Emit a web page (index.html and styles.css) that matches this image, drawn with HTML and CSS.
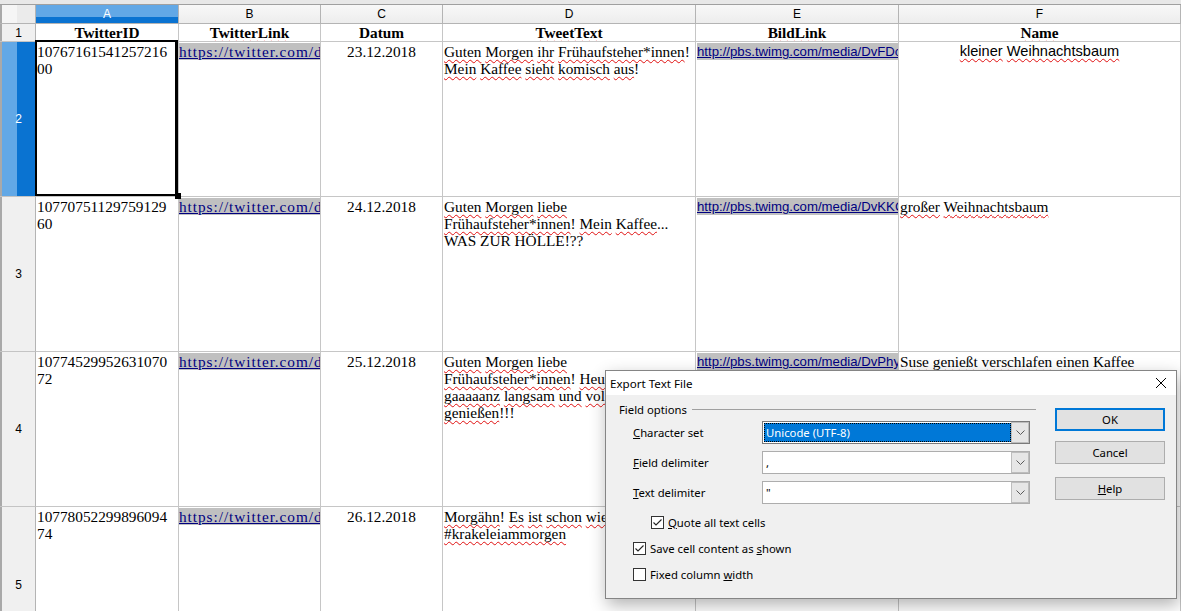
FILE: index.html
```html
<!DOCTYPE html>
<html lang="de">
<head>
<meta charset="utf-8">
<title>Export Text File</title>
<link rel="stylesheet" href="styles.css">
</head>
<body>
<div class="topstrip"></div>
<div class="sheet">
  <div class="corner"></div>
  <div class="ch on">A</div>
  <div class="ch">B</div>
  <div class="ch">C</div>
  <div class="ch">D</div>
  <div class="ch">E</div>
  <div class="ch">F</div>

  <div class="rh">1</div>
  <div class="c hd"><span class="sp">TwitterID</span></div>
  <div class="c hd"><span class="sp">TwitterLink</span></div>
  <div class="c hd">Datum</div>
  <div class="c hd"><span class="sp">TweetText</span></div>
  <div class="c hd"><span class="sp">BildLink</span></div>
  <div class="c hd"><span class="sp">Name</span></div>

  <div class="rh on">2</div>
  <div class="c sel">10767161541257216<br>00</div>
  <div class="c tw"><span class="lnk">https://twitter.com/d</span></div>
  <div class="c ctr">23.12.2018</div>
  <div class="c"><span class="sp">Guten</span> <span class="sp">Morgen</span> <span class="sp">ihr</span> <span class="sp">Frühaufsteher*innen</span>!<br><span class="sp">Mein</span> <span class="sp">Kaffee</span> <span class="sp">sieht</span> <span class="sp">komisch</span> <span class="sp">aus</span>!</div>
  <div class="c sans"><span class="lnk">http://pbs.twimg.com/media/DvFDc</span></div>
  <div class="c sansb ctr"><span class="sp">kleiner</span> <span class="sp">Weihnachtsbaum</span></div>

  <div class="rh">3</div>
  <div class="c">10770751129759129<br>60</div>
  <div class="c tw"><span class="lnk">https://twitter.com/d</span></div>
  <div class="c ctr">24.12.2018</div>
  <div class="c"><span class="sp">Guten</span> <span class="sp">Morgen</span> <span class="sp">liebe</span><br><span class="sp">Frühaufsteher*innen</span>! <span class="sp">Mein</span> <span class="sp">Kaffee</span>...<br>WAS ZUR HÖLLE!??</div>
  <div class="c sans"><span class="lnk">http://pbs.twimg.com/media/DvKKC</span></div>
  <div class="c"><span class="sp">großer</span> <span class="sp">Weihnachtsbaum</span></div>

  <div class="rh">4</div>
  <div class="c">10774529952631070<br>72</div>
  <div class="c tw"><span class="lnk">https://twitter.com/d</span></div>
  <div class="c ctr">25.12.2018</div>
  <div class="c"><span class="sp">Guten</span> <span class="sp">Morgen</span> <span class="sp">liebe</span><br><span class="sp">Frühaufsteher*innen</span>! <span class="sp">Heute</span><br><span class="sp">gaaaaanz</span> <span class="sp">langsam</span> <span class="sp">und</span> <span class="sp">voller</span><br><span class="sp">genießen</span>!!!</div>
  <div class="c sans"><span class="lnk">http://pbs.twimg.com/media/DvPhy</span></div>
  <div class="c"><span class="sp">Suse</span> <span class="sp">genießt</span> <span class="sp">verschlafen</span> <span class="sp">einen</span> <span class="sp">Kaffee</span></div>

  <div class="rh">5</div>
  <div class="c">10778052299896094<br>74</div>
  <div class="c tw"><span class="lnk">https://twitter.com/d</span></div>
  <div class="c ctr">26.12.2018</div>
  <div class="c"><span class="sp">Morgähn</span>! <span class="sp">Es</span> <span class="sp">ist</span> <span class="sp">schon</span> <span class="sp">wieder</span><br><span class="sp">#krakeleiammorgen</span></div>
  <div class="c"></div>
  <div class="c"></div>
</div>

<div class="dialog">
  <div class="titlebar">
    <span class="title">Export Text File</span>
    <svg class="close" width="10" height="10" viewBox="0 0 10 10"><path d="M0 0L10 10M10 0L0 10" stroke="#000" stroke-width="1" fill="none"/></svg>
  </div>
  <div class="dbody">
    <div class="left">
      <div class="fhead"><span>Field options</span><div class="rule"></div></div>
      <div class="fields">
        <div class="lbl"><span><u>C</u>haracter set</span></div>
        <div class="combo focus"><div class="val selv">Unicode (UTF-8)</div><div class="ddb"><svg width="9" height="5" viewBox="0 0 9 5"><path d="M0.5 0.5L4.5 4.5L8.5 0.5" stroke="#5a5a5a" fill="none"/></svg></div></div>
        <div class="lbl"><span><u>F</u>ield delimiter</span></div>
        <div class="combo"><div class="val">,</div><div class="ddb"><svg width="9" height="5" viewBox="0 0 9 5"><path d="M0.5 0.5L4.5 4.5L8.5 0.5" stroke="#5a5a5a" fill="none"/></svg></div></div>
        <div class="lbl"><span><u>T</u>ext delimiter</span></div>
        <div class="combo"><div class="val">"</div><div class="ddb"><svg width="9" height="5" viewBox="0 0 9 5"><path d="M0.5 0.5L4.5 4.5L8.5 0.5" stroke="#5a5a5a" fill="none"/></svg></div></div>
      </div>
      <div class="checks">
        <div class="chk ind"><span class="box"><svg width="11" height="11" viewBox="0 0 11 11"><path d="M1.5 5.5L4 8L9.5 2.5" stroke="#222" stroke-width="1.1" fill="none"/></svg></span><span><u>Q</u>uote all text cells</span></div>
        <div class="chk"><span class="box"><svg width="11" height="11" viewBox="0 0 11 11"><path d="M1.5 5.5L4 8L9.5 2.5" stroke="#222" stroke-width="1.1" fill="none"/></svg></span><span>Save cell content as <u>s</u>hown</span></div>
        <div class="chk"><span class="box"></span><span>Fixed column <u>w</u>idth</span></div>
      </div>
    </div>
    <div class="btns">
      <div class="pb def">OK</div>
      <div class="pb cancel">Cancel</div>
      <div class="pb help"><span><u>H</u>elp</span></div>
    </div>
  </div>
</div>
</body>
</html>
```

FILE: styles.css
```css
* { box-sizing: border-box; }
html, body { margin: 0; padding: 0; }
body {
  width: 1181px;
  height: 611px;
  overflow: hidden;
  background: #fff;
  font-family: "Liberation Serif", serif;
  position: relative;
  color: #000;
}
.topstrip {
  height: 5px;
  background: #e8e8e8;
  border-bottom: 1px solid #a0a0a0;
}
.sheet {
  display: grid;
  grid-template-columns: 36px 143px 142px 122px 253px 203px 282px;
  grid-template-rows: 19px 18px 155px 155px 155px 104px;
}
.sheet > :nth-last-child(-n+7) { border-bottom: 0; }
.corner {
  background: linear-gradient(to right, #f5f5f5 0 17px, #ebebeb 17px);
  border-right: 1px solid #b4b4b4;
  border-bottom: 1px solid #b4b4b4;
  box-shadow: inset 2px 0 #a9a9a9;
}
.ch {
  background: linear-gradient(#f8f8f8, #ededed);
  border-right: 1px solid #b4b4b4;
  border-bottom: 1px solid #b4b4b4;
  font: 12px "Liberation Sans", sans-serif;
  line-height: 18px;
  text-align: center;
}
.ch.on {
  background: linear-gradient(#62a8e6 0 12px, #0a73d1 12px);
  color: #fff;
}
.rh {
  background: #f0f0f0;
  border-right: 1px solid #b4b4b4;
  border-bottom: 1px solid #c4c4c4;
  box-shadow: inset 2px 0 #a9a9a9;
  font: 12px "Liberation Sans", sans-serif;
  display: flex;
  align-items: center;
  justify-content: center;
  padding-left: 2px;
}
.rh:nth-last-child(7) { padding-top: 51px; }
.rh.on {
  background: linear-gradient(to right, #62a8e6 0 17px, #0a73d1 17px);
  color: #fff;
}
.c {
  border-right: 1px solid #c6c6c6;
  border-bottom: 1px solid #c6c6c6;
  padding: 1px 1px 0 1px;
  font-size: 15.3px;
  line-height: 17px;
  white-space: nowrap;
  overflow: hidden;
}
.c.hd {
  font-weight: bold;
  text-align: center;
  padding-top: 0;
}
.c.ctr { text-align: center; }
.c.tw { padding-left: 0; padding-right: 0; }
.c.tw .lnk { letter-spacing: 0.95px; }
.c.sans {
  font-family: "Liberation Sans", sans-serif;
  font-size: 13.2px;
  padding-right: 0;
}
.c.sansb {
  font-family: "Liberation Sans", sans-serif;
  font-size: 14.6px;
}
.c.sel {
  position: relative;
  overflow: visible;
  z-index: 2;
}
.c.sel::after {
  content: "";
  position: absolute;
  left: -1px;
  top: -2px;
  right: 0;
  bottom: 0;
  border: 2px solid #000;
  border-right-width: 3px;
}
.c.sel::before {
  content: "";
  position: absolute;
  right: -3px;
  bottom: -3px;
  width: 6px;
  height: 6px;
  background: #000;
  z-index: 3;
}
.sp {
  text-decoration: underline wavy #e01010;
  text-decoration-thickness: 1px;
  text-underline-offset: 2px;
  text-decoration-skip-ink: none;
}
.lnk {
  display: inline-block;
  max-width: 100%;
  overflow: hidden;
  vertical-align: top;
  background: #c0c0c0;
  color: #000080;
  text-decoration: underline;
}

/* dialog */
.dialog {
  position: absolute;
  left: 605px;
  top: 370px;
  width: 572px;
  height: 229px;
  border: 1px solid #858585;
  background: #f0f0f0;
  box-shadow: 2px 6px 16px rgba(0, 0, 0, 0.3);
  font: 11.3px "Noto Sans", sans-serif;
  display: flex;
  flex-direction: column;
  z-index: 10;
}
.titlebar {
  height: 24px;
  background: #fff;
  display: flex;
  align-items: center;
  padding-left: 4px;
  font-size: 11.6px;
}
.title { flex: 1; }
.close { margin-right: 10px; }
.dbody {
  flex: 1;
  display: flex;
  padding: 6px 10px 0 13px;
}
.left { width: 417px; }
.fhead {
  display: flex;
  align-items: center;
  height: 16px;
}
.rule {
  flex: 1;
  height: 1px;
  background: #a0a0a0;
  margin-left: 5px;
}
.fields {
  display: grid;
  grid-template-columns: 129px 268px;
  row-gap: 7px;
  margin: 4px 0 0 14px;
}
.lbl {
  display: flex;
  align-items: center;
  height: 23px;
}
.combo {
  height: 23px;
  border: 1px solid #adadad;
  background: #fff;
  display: flex;
  padding: 1px 0 1px 1px;
}
.combo.focus { border-color: #7a7a7a; }
.val {
  flex: 1;
  line-height: 19px;
  padding-left: 2px;
}
.val.selv {
  background: #0078d7;
  color: #fff;
  outline: 1px dotted #000;
  outline-offset: -1px;
}
.ddb {
  width: 18px;
  margin-top: -1px;
  margin-bottom: -1px;
  border: 1px solid #bdbdbd;
  background: #e6e6e6;
  display: flex;
  align-items: center;
  justify-content: center;
}
.checks {
  margin: 5px 0 0 14px;
}
.chk {
  height: 26px;
  display: flex;
  align-items: center;
  gap: 4px;
}
.chk.ind { margin-left: 18px; }
.box {
  width: 13px;
  height: 13px;
  border: 1px solid #333;
  background: #fff;
  display: flex;
  align-items: center;
  justify-content: center;
}
.btns {
  width: 110px;
  margin-left: 19px;
  display: flex;
  flex-direction: column;
}
.pb {
  height: 23px;
  border: 1px solid #adadad;
  background: #e1e1e1;
  display: flex;
  align-items: center;
  justify-content: center;
}
.pb.def {
  margin-top: 7px;
  border: 2px solid #0078d7;
}
.pb.cancel { margin-top: 10px; }
.pb.help { margin-top: 13px; }
```
